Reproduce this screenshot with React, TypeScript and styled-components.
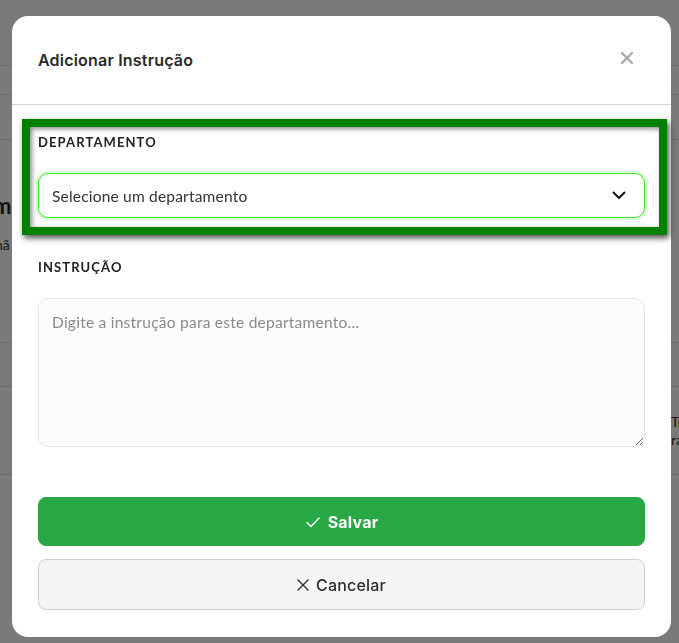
import React from "react";
import styled, { createGlobalStyle } from "styled-components";

const Global = createGlobalStyle`
  * { box-sizing: border-box; }
  html, body { margin: 0; padding: 0; }
  body { background: #fff; font-family: "Lato", "Open Sans", sans-serif; overflow: hidden; }
`;

const Page = styled.div`
  width: 679px;
  height: 643px;
  display: flex;
  flex-direction: column;
  background: #ffffff;
`;

const PageRow = styled.div<{ $h: number; $line?: boolean }>`
  height: ${(p) => p.$h}px;
  flex-shrink: 0;
  border-bottom: ${(p) => (p.$line ? "1px solid #dcdcdc" : "none")};
  display: flex;
  align-items: center;
  justify-content: space-between;
  color: #222;
  font-family: "Lato", sans-serif;
  overflow: hidden;
`;

const PageHeading = styled.span`
  font-size: 22px;
  font-weight: 700;
  margin-left: -7px;
`;

const PageText = styled.span<{ $right?: boolean }>`
  font-size: 14px;
  color: #333;
  margin-left: ${(p) => (p.$right ? "auto" : "-5px")};
  margin-right: ${(p) => (p.$right ? "-4px" : "0")};
  line-height: 18px;
`;

const Overlay = styled.div`
  position: fixed;
  inset: 0;
  background: rgba(0, 0, 0, 0.52);
  display: flex;
  justify-content: flex-start;
  align-items: flex-start;
  padding: 16px 0 0 12px;
`;

const Modal = styled.div`
  width: 659px;
  background: #ffffff;
  border-radius: 16px;
  display: flex;
  flex-direction: column;
`;

const Header = styled.div`
  height: 89px;
  border-bottom: 1px solid #d4d4d4;
  display: flex;
  align-items: center;
  justify-content: space-between;
  padding: 0 38px 0 26px;
`;

const Title = styled.h2`
  margin: 0;
  font-family: "Inter", "Open Sans", sans-serif;
  font-size: 16px;
  font-weight: 600;
  color: #2a2a2a;
  letter-spacing: 0.2px;
`;

const CloseButton = styled.button`
  border: 0;
  background: transparent;
  padding: 0;
  width: 12px;
  height: 12px;
  display: flex;
  align-items: center;
  justify-content: center;
  cursor: pointer;
  margin-top: -4px;
`;

const Body = styled.div`
  padding: 14px 26px 27px;
  display: flex;
  flex-direction: column;
`;

const Highlight = styled.div`
  margin: 0 -22px 0 -16px;
  border: 8px solid #008000;
  padding: 6px 14px 9px 8px;
  box-shadow: 2px 3px 6px rgba(0, 0, 0, 0.7), inset 2px 2px 5px rgba(0, 0, 0, 0.45);
  display: flex;
  flex-direction: column;
`;

const Label = styled.label<{ $top?: number }>`
  display: block;
  margin-top: ${(p) => p.$top ?? 0}px;
  font-family: "Lato", "Open Sans", sans-serif;
  font-size: 13px;
  font-weight: 700;
  letter-spacing: 1.1px;
  line-height: 18px;
  color: #222;
  text-transform: uppercase;
`;

const Select = styled.div`
  margin-top: 22px;
  height: 45px;
  border: 1px solid #3de82a;
  border-radius: 10px;
  box-shadow: 0 0 0 2px rgba(90, 240, 70, 0.22);
  display: flex;
  align-items: center;
  justify-content: space-between;
  padding: 0 18px 0 13px;
  font-family: "Lato", "Open Sans", sans-serif;
  font-size: 15.5px;
  letter-spacing: 0.2px;
  color: #333;
  background: #fff;
`;

const TextArea = styled.textarea`
  margin-top: 22px;
  height: 149px;
  width: 100%;
  border: 1px solid #e6e6e6;
  border-radius: 10px;
  background: #fbfcfb;
  padding: 14px 13px;
  font-family: "Lato", "Open Sans", sans-serif;
  font-size: 15.5px;
  letter-spacing: 0.25px;
  color: #333;
  resize: vertical;
  outline: none;
  &::placeholder {
    color: #8a8a8a;
  }
`;

const Button = styled.button<{ $variant: "primary" | "secondary" }>`
  width: 100%;
  height: ${(p) => (p.$variant === "primary" ? 49 : 51)}px;
  margin-top: ${(p) => (p.$variant === "primary" ? 50 : 13)}px;
  border-radius: 8px;
  border: 1px solid ${(p) => (p.$variant === "primary" ? "#28a745" : "#cfcfcf")};
  background: ${(p) => (p.$variant === "primary" ? "#28a745" : "#f6f4f5")};
  color: ${(p) => (p.$variant === "primary" ? "#ffffff" : "#2e2e2e")};
  font-family: "Inter", "Open Sans", sans-serif;
  font-size: 16px;
  font-weight: ${(p) => (p.$variant === "primary" ? 700 : 500)};
  letter-spacing: 0.2px;
  display: flex;
  align-items: center;
  justify-content: center;
  gap: 7px;
  cursor: pointer;
`;

const CheckIcon = () => (
  <svg width="16" height="16" viewBox="0 0 16 16" fill="none">
    <path d="M2 8.5 L6 12.5 L14 4" stroke="#fff" strokeWidth="1.5" strokeLinecap="round" strokeLinejoin="round" />
  </svg>
);

const XIcon = ({ color, size, width }: { color: string; size: number; width: number }) => (
  <svg width={size} height={size} viewBox="0 0 12 12" fill="none">
    <path d="M1 1 L11 11 M11 1 L1 11" stroke={color} strokeWidth={width} strokeLinecap="square" />
  </svg>
);

const Chevron = () => (
  <svg width="14" height="9" viewBox="0 0 14 9" fill="none">
    <path d="M1.5 1.5 L7 7 L12.5 1.5" stroke="#111" strokeWidth="2" strokeLinecap="round" strokeLinejoin="round" />
  </svg>
);

export default function App() {
  return (
    <>
      <Global />
      <Page>
        <PageRow $h={66} $line />
        <PageRow $h={29} $line />
        <PageRow $h={45} $line />
        <PageRow $h={44} />
        <PageRow $h={42}>
          <PageHeading>m</PageHeading>
        </PageRow>
        <PageRow $h={38}>
          <PageText>nã</PageText>
        </PageRow>
        <PageRow $h={79} $line />
        <PageRow $h={44} $line />
        <PageRow $h={88} $line>
          <PageText $right>
            Tr
            <br />
            ra
          </PageText>
        </PageRow>
      </Page>
      <Overlay>
        <Modal>
          <Header>
            <Title>Adicionar Instrução</Title>
            <CloseButton aria-label="Fechar">
              <XIcon color="#a9adb3" size={12} width={2.4} />
            </CloseButton>
          </Header>
          <Body>
            <Highlight>
              <Label>Departamento</Label>
              <Select>
                <span>Selecione um departamento</span>
                <Chevron />
              </Select>
            </Highlight>
            <Label $top={23}>Instrução</Label>
            <TextArea placeholder="Digite a instrução para este departamento..." />
            <Button $variant="primary">
              <CheckIcon />
              Salvar
            </Button>
            <Button $variant="secondary">
              <XIcon color="#2e2e2e" size={12} width={1.3} />
              Cancelar
            </Button>
          </Body>
        </Modal>
      </Overlay>
    </>
  );
}
